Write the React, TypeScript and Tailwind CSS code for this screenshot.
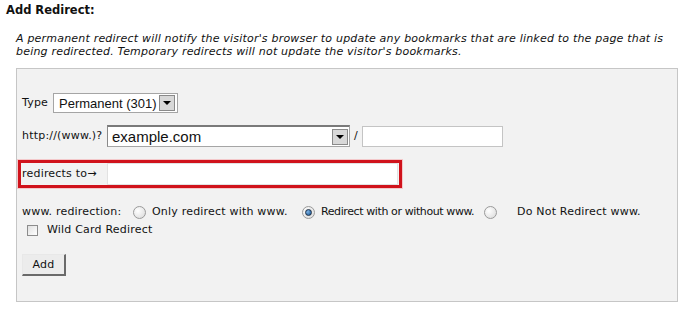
import React from "react";

const Radio = ({ checked }: { checked?: boolean }) => (
  <span className="inline-flex items-center justify-center w-[13px] h-[13px] rounded-full border border-[#9a9a9a] bg-[radial-gradient(circle_at_35%_35%,#ffffff,#d8d8d8)] shrink-0">
    {checked && (
      <span className="w-[7px] h-[7px] rounded-full bg-[radial-gradient(circle_at_35%_35%,#7fb4e6,#0f4f8f)] border border-[#1e2f44]" />
    )}
  </span>
);

const DropButton = () => (
  <span className="flex items-center justify-center w-[16px] h-[16px] bg-[#d8d8d8] border border-[#8a8a8a] shrink-0">
    <span className="w-0 h-0 border-l-[4px] border-r-[4px] border-t-[4px] border-l-transparent border-r-transparent border-t-black" />
  </span>
);

export default function App() {
  return (
    <div className="w-[689px] h-[309px] bg-white text-[#111] [font-family:'DejaVu_Sans',Verdana,sans-serif] text-[11px] tracking-[0.2px] overflow-hidden">
      <div className="pl-[6px] pt-[3px] font-bold text-[11.5px] tracking-normal leading-[15px]">
        Add Redirect:
      </div>
      <p className="ml-[16px] mt-[14px] w-[660px] italic leading-[13px]">
        A permanent redirect will notify the visitor's browser to update any bookmarks that are linked to the page that is being redirected. Temporary redirects will not update the visitor's bookmarks.
      </p>

      <div className="ml-[16px] mt-[10px] w-[662px] h-[234px] border border-[#c6c6c6] bg-[#f2f2f2] pl-[5px] pt-[24px] flex flex-col">
        {/* Type row */}
        <div className="flex items-center h-[20px]">
          <span className="w-[31px] whitespace-nowrap">Type</span>
          <div className="flex items-center justify-between w-[125px] h-[20px] bg-white border border-[#a5a5a5] pl-[5px] pr-[2px]">
            <span className="[font-family:'Liberation_Sans',Arial,sans-serif] text-[13px] tracking-normal leading-none">
              Permanent (301)
            </span>
            <DropButton />
          </div>
        </div>

        {/* http row */}
        <div className="flex items-center h-[22px] mt-[12px]">
          <span className="w-[85px] whitespace-nowrap">http://(www.)?</span>
          <div className="flex items-center justify-between w-[243px] h-[22px] bg-white border border-[#a5a5a5] border-t-[2px] border-t-[#7a7a7a] border-l-[#8a8a8a] pl-[4px] pr-[1px]">
            <span className="[font-family:'Liberation_Sans',Arial,sans-serif] text-[15px] tracking-normal leading-none">
              example.com
            </span>
            <DropButton />
          </div>
          <span className="mx-[4px]">/</span>
          <input
            className="w-[141px] h-[21px] bg-white border border-[#c4c4c4] outline-none"
            defaultValue=""
          />
        </div>

        {/* redirects to */}
        <div className="-ml-[4px] mt-[13px] w-[384px] h-[28px] border-[3px] border-[#d0121b] shadow-[0_0_0_1px_#f3c8ca] flex items-center pl-[1px]">
          <span className="w-[85px] whitespace-nowrap">redirects to→</span>
          <input
            className="flex-1 mr-[1px] h-[22px] bg-white border border-[#e2e2e2] outline-none"
            defaultValue=""
          />
        </div>

        {/* www redirection */}
        <div className="flex items-center mt-[17px] h-[14px] whitespace-nowrap">
          <span className="w-[111px]">www. redirection:</span>
          <Radio />
          <span className="ml-[6px] w-[150px]">Only redirect with www.</span>
          <Radio checked />
          <span className="ml-[6px] w-[163px] tracking-[-0.4px]">Redirect with or without www.</span>
          <Radio />
          <span className="ml-[20px]">Do Not Redirect www.</span>
        </div>

        <div className="flex items-center mt-[4px] h-[14px] pl-[5px]">
          <span className="w-[11px] h-[11px] border border-[#8c8c8c] bg-[linear-gradient(135deg,#e0e0e0,#ffffff)] shrink-0" />
          <span className="ml-[9px]">Wild Card Redirect</span>
        </div>

        <div className="mt-[17px]">
          <button className="w-[44px] h-[22px] bg-[#ececec] border border-[#e8e8e8] border-r-[#6a6a6a] border-b-[#6a6a6a] border-r-2 border-b-2 text-[11px] leading-none">
            Add
          </button>
        </div>
      </div>
    </div>
  );
}
